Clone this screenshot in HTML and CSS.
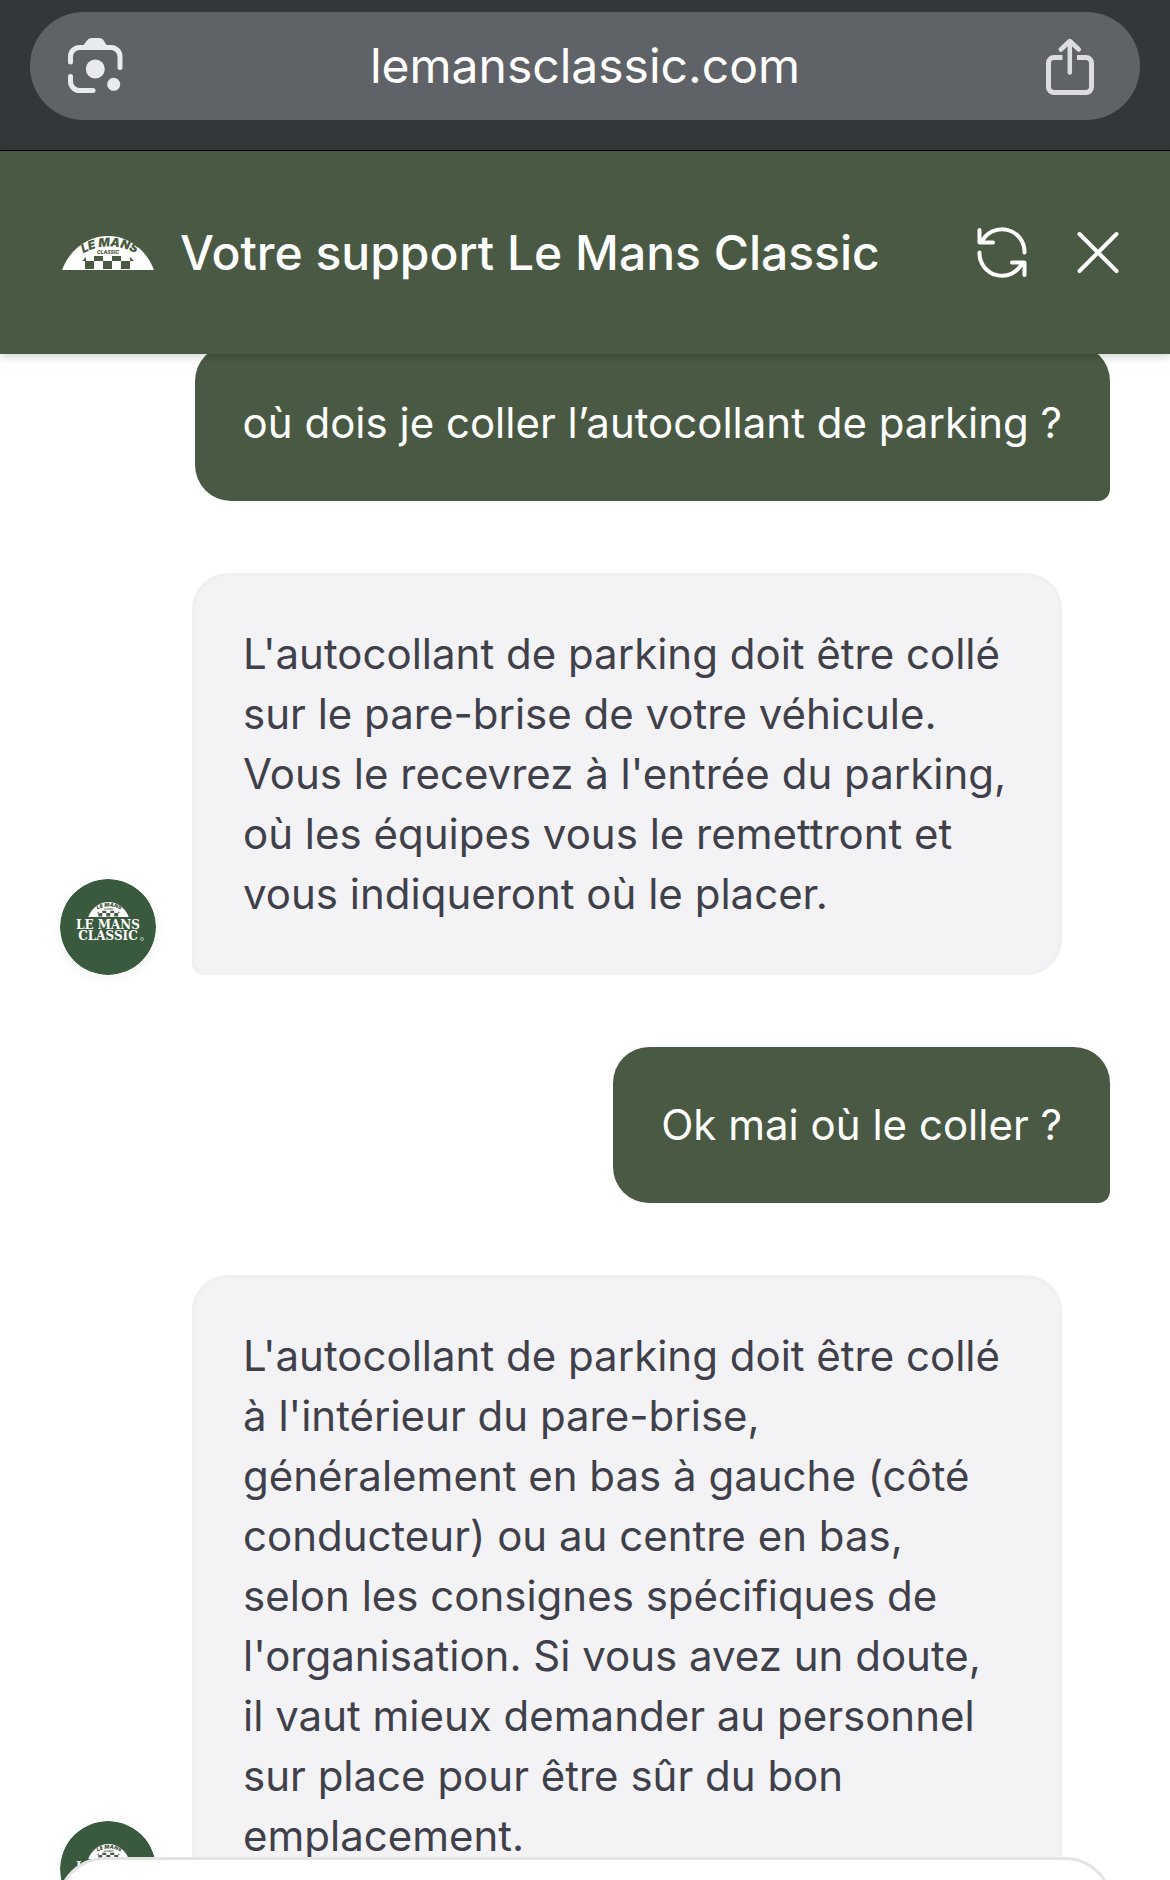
FILE: index.html
```html
<!DOCTYPE html>
<html lang="fr">
<head>
<meta charset="UTF-8">
<meta name="viewport" content="width=device-width, initial-scale=1.0">
<title>Votre support Le Mans Classic</title>
<link rel="stylesheet" href="styles.css">
</head>
<body>
	<!-- Shared logo shapes -->
	<svg class="sprite" aria-hidden="true">
		<symbol id="dome" viewBox="0 0 92 34">
			<path fill="#fff" d="M0 34C8 13 26 0 46 0s38 13 46 34z"/>
			<path class="ink" d="M20 25l4-4v4zM72 25l-4-4v4zM23 25h9v8h-9zM41 25h9v8h-9zM59 25h9v8h-9zM32 20h9v5h-9zM50 20h9v5h-9z"/>
			<path id="domeArc" fill="none" d="M20 18Q47 3 75 18"/>
			<text class="dome-name"><textPath href="#domeArc" startOffset="50%" text-anchor="middle">LE MANS</textPath></text>
			<text class="dome-sub" x="46" y="18" text-anchor="middle">CLASSIC</text>
		</symbol>
		<symbol id="badge" viewBox="0 0 96 96">
			<circle cx="48" cy="48" r="48" fill="#3a5a40"/>
			<use href="#dome" x="28" y="23" width="41" height="15"/>
			<text class="badge-name" x="48" y="50" text-anchor="middle">LE MANS</text>
			<text class="badge-name" x="48" y="61" text-anchor="middle">CLASSIC</text>
			<circle cx="82" cy="60" r="1.5" fill="none" stroke="#a9b9ac"/>
		</symbol>
	</svg>

	<div class="browser-bar">
		<div class="address">
			<button type="button" class="icon-btn" aria-label="Recherche par image">
				<svg width="60" height="60" viewBox="3 0 60 60" fill="none" stroke="#e8eaed" stroke-width="5" stroke-linecap="round">
					<path d="M5.500 26v-5.500a9 9 0 0 1 9-9H46a9 9 0 0 1 9 9v11M5.500 40.500v5a9 9 0 0 0 9 9H28"/>
					<path fill="#e8eaed" stroke="none" d="M18 10l3.500-5q2-3 5-3h7.500q3.500 0 5 3l3 5z"/>
					<circle cx="30.300" cy="33" r="9.500" fill="#e8eaed" stroke="none"/>
					<circle cx="48.700" cy="48.300" r="6.500" fill="#e8eaed" stroke="none"/>
				</svg>
			</button>
			<span class="url">lemansclassic.com</span>
			<button type="button" class="icon-btn" aria-label="Partager">
				<svg width="60" height="60" viewBox="2 0 60 60" fill="none" stroke="#dcdce2" stroke-width="5" stroke-linecap="round" stroke-linejoin="round">
					<path stroke-linecap="butt" d="M22.500 21.500H14a5.500 5.500 0 0 0-5.500 5.500v24a5.500 5.500 0 0 0 5.500 5.500h32a5.500 5.500 0 0 0 5.500-5.500V27a5.500 5.500 0 0 0-5.500-5.500h-9"/>
					<path stroke-width="4.500" d="M29.800 36.500V5.500M20.800 13.500l9-8.500 9 8.500"/>
				</svg>
			</button>
		</div>
	</div>

	<header class="chat-header">
		<svg class="chat-logo" role="img" aria-label="Le Mans Classic"><use href="#dome"/></svg>
		<h1>Votre support Le Mans Classic</h1>
		<button type="button" class="icon-btn" aria-label="Recommencer">
			<svg width="60" height="60" viewBox="0 0 60 60" fill="none" stroke="#fff" stroke-width="4" stroke-linecap="round" stroke-linejoin="round">
				<path d="M52.500 29.500A22.500 22.500 0 0 0 9.500 19.500M7.500 7v12.500H21M7.500 29.500A22.500 22.500 0 0 0 50.500 39.500M40 39.500h12.500V52"/>
			</svg>
		</button>
		<button type="button" class="icon-btn" aria-label="Fermer">
			<svg width="60" height="60" viewBox="0 0 60 60" fill="none" stroke="#fff" stroke-width="4" stroke-linecap="round">
				<path d="M11.500 11l37 37M48.500 11l-37 37"/>
			</svg>
		</button>
	</header>

	<main class="messages">
		<div class="row user">
			<p class="bubble">où dois je coller l’autocollant de parking ?</p>
		</div>
		<div class="row bot">
			<svg class="avatar" role="img" aria-label="Le Mans Classic"><use href="#badge"/></svg>
			<p class="bubble">L'autocollant de parking doit être collé sur le pare-brise de votre véhicule. Vous le recevrez à l'entrée du parking, où les équipes vous le remettront et vous indiqueront où le placer.</p>
		</div>
		<div class="row user">
			<p class="bubble">Ok mai où le coller ?</p>
		</div>
		<div class="row bot">
			<svg class="avatar" role="img" aria-label="Le Mans Classic"><use href="#badge"/></svg>
			<p class="bubble">L'autocollant de parking doit être collé à l'intérieur du pare-brise, généralement en bas à gauche (côté conducteur) ou au centre en bas, selon les consignes spécifiques de l'organisation. Si vous avez un doute, il vaut mieux demander au personnel sur place pour être sûr du bon emplacement.</p>
		</div>
	</main>

	<form class="composer">
		<input type="text" aria-label="Votre message">
	</form>
</body>
</html>
```
FILE: styles.css
```css
* {
	box-sizing: border-box;
}

body {
	margin: 0;
	height: 100vh;
	display: flex;
	flex-direction: column;
	position: relative;
	overflow: hidden;
	background-color: #fff;
	font-family: Inter, "Liberation Sans", sans-serif;
}

.sprite {
	position: absolute;
	width: 0;
	height: 0;
}

.icon-btn {
	flex: none;
	padding: 0;
	border: none;
	background: none;
	cursor: pointer;
}

.icon-btn svg {
	display: block;
}

/* Browser bar */
.browser-bar {
	flex: none;
	padding: 12px 30px 30px;
	background-color: #33373a;
	border-bottom: 1px solid #000;
}

.address {
	display: flex;
	align-items: center;
	height: 108px;
	padding: 0 38px;
	border-radius: 54px;
	background-color: #5f6367;
}

.url {
	flex: 1;
	text-align: center;
	color: #fff;
	font-size: 48px;
	line-height: 60px;
}

/* Chat header */
.chat-header {
	flex: none;
	display: flex;
	align-items: center;
	height: 203px;
	padding: 0 42px 0 62px;
	background-color: #4a5943;
	box-shadow: 0 3px 8px rgba(0, 0, 0, 0.16);
	color: #fff;
	z-index: 1;
}

.chat-logo {
	flex: none;
	width: 92px;
	height: 34px;
	margin-right: 26px;
}

.chat-header h1 {
	flex: 1;
	margin: 0;
	font-size: 48px;
	font-weight: 500;
	line-height: 60px;
}

.chat-header .icon-btn + .icon-btn {
	margin-left: 36px;
}

.ink {
	fill: #4a5943;
}

.dome-name {
	fill: #4a5943;
	font: italic 900 12px Inter, sans-serif;
}

.dome-sub {
	fill: #4a5943;
	font: italic 800 5px Inter, sans-serif;
}

.badge-name {
	fill: #fff;
	font: 700 12px "DejaVu Serif", serif;
}

/* Messages */
.messages {
	flex: 1;
	min-height: 0;
	display: flex;
	flex-direction: column;
	gap: 72px;
	margin-top: -9px;
	padding: 0 60px;
	overflow: hidden;
}

.row {
	flex: none;
	display: flex;
	align-items: flex-end;
	gap: 36px;
}

.row.user {
	justify-content: flex-end;
}

.bubble {
	margin: 0;
	padding: 48px;
	border-radius: 36px;
	font-size: 42px;
	line-height: 60px;
}

.user .bubble {
	border-bottom-right-radius: 12px;
	background-color: #4a5943;
	color: #fff;
}

.bot .bubble {
	margin-right: 48px;
	border: 3px solid #f0f0f2;
	border-bottom-left-radius: 12px;
	background-color: #f3f3f5;
	color: #40404a;
}

.avatar {
	flex: none;
	width: 96px;
	height: 96px;
	border-radius: 50%;
	box-shadow: 0 3px 12px rgba(0, 0, 0, 0.05);
}

/* Composer, floats over the end of the thread */
.composer {
	position: absolute;
	left: 57px;
	right: 57px;
	bottom: 0;
	height: 23px;
	overflow: hidden;
}

.composer input {
	display: block;
	width: 100%;
	height: 156px;
	padding: 0 48px;
	border: 3px solid #e4e4e4;
	border-radius: 48px;
	background-color: #fff;
	font: inherit;
	font-size: 42px;
}
```
